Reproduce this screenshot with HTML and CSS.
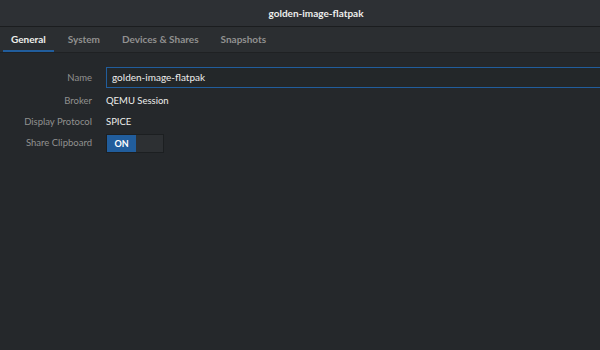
FILE: index.html
```html
<!DOCTYPE html>
<html>
<head>
<meta charset="utf-8">
<link rel="stylesheet" href="styles.css">
</head>
<body>
<div class="window">
  <header class="titlebar"><span class="title">golden-image-flatpak</span></header>
  <nav class="tabs">
    <span class="tab active">General</span>
    <span class="tab">System</span>
    <span class="tab">Devices &amp; Shares</span>
    <span class="tab">Snapshots</span>
  </nav>
  <main class="content">
    <div class="grid">
      <div class="label">Name</div>
      <div class="entry">golden-image-flatpak</div>
      <div class="label">Broker</div>
      <div class="value">QEMU Session</div>
      <div class="label">Display Protocol</div>
      <div class="value">SPICE</div>
      <div class="label">Share Clipboard</div>
      <div class="value"><div class="switch"><span class="on">ON</span><span class="off"></span></div></div>
    </div>
  </main>
</div>
</body>
</html>
```
FILE: styles.css
```css
html, body { margin: 0; padding: 0; }
body {
  width: 600px; height: 350px; overflow: hidden;
  background: #25282b;
  font-family: Lato, "Open Sans", sans-serif;
  font-size: 9.5px;
  color: #eeeeec;
}
.window { display: flex; flex-direction: column; height: 350px; }
.titlebar {
  height: 27px; box-sizing: border-box;
  background: #2d3034;
  border-bottom: 1px solid #1b1d1f;
  display: flex; align-items: center; justify-content: center;
  padding-left: 32px;
}
.title { font-weight: bold; font-size: 10px; color: #eeeeec; }
.tabs {
  height: 26px; box-sizing: border-box;
  background: #2b2e31;
  border-bottom: 1px solid #1f2123;
  display: flex; padding-left: 3px; gap: 6px;
}
.tab {
  padding: 1px 8px 0; display: flex; align-items: center;
  color: #919190; font-weight: bold; font-size: 10px;
  border-bottom: 2px solid transparent;
}
.tab.active { color: #eeeeec; border-bottom-color: #215d9c; }
.content { flex: 1; padding-top: 14px; }
.grid {
  display: grid; grid-template-columns: 92px 1fr;
  column-gap: 14px; row-gap: 4px; align-items: center;
}
.label { text-align: right; color: #919190; }
.value { height: 17px; display: flex; align-items: center; }
.entry {
  height: 21px; box-sizing: border-box;
  border: 1px solid #215d9c; border-right: none;
  background: #232729; padding-left: 5px; padding-bottom: 1px;
  display: flex; align-items: center; font-size: 10px;
}
.switch {
  display: flex; width: 58px; height: 19px; margin-top: 2px;
  border: 1px solid #1c1f21; box-sizing: border-box; background: #2d3033;
}
.on {
  width: 29px; background: #215d9c; color: #fff; font-weight: bold;
  font-size: 9px; display: flex; align-items: center; justify-content: center;
}
.off { flex: 1; }
```
